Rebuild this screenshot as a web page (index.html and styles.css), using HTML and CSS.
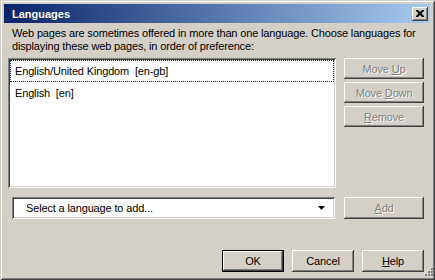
FILE: index.html
```html
<!DOCTYPE html>
<html lang="en">

<head>
    <meta charset="UTF-8">
    <title>Languages</title>
    <link rel="stylesheet" href="styles.css">
</head>

<body>
    <div class="window">
        <div class="titlebar">
            <span class="title">Languages</span>
            <div class="close">
                <svg width="8" height="7" viewBox="0 0 8 7">
                    <path d="M0 0h2l2 2 2-2h2v1l-2.5 2.5 2.5 2.5v1h-2l-2-2-2 2h-2v-1l2.5-2.5-2.5-2.5z" fill="#000" />
                </svg>
            </div>
        </div>
        <div class="content">
            <p class="intro">Web pages are sometimes offered in more than one language. Choose languages for<br>displaying these web pages, in order of preference:</p>
            <div class="lang-grid">
                <div class="listbox">
                    <div class="item focused">English/United Kingdom&nbsp; [en-gb]</div>
                    <div class="item">English&nbsp; [en]</div>
                </div>
                <div class="side-buttons">
                    <div class="btn disabled"><span>Move <u>U</u>p</span></div>
                    <div class="btn disabled"><span>Move <u>D</u>own</span></div>
                    <div class="btn disabled"><span><u>R</u>emove</span></div>
                </div>
                <div class="combo">
                    <span>Select a language to add...</span>
                    <svg width="7" height="4" viewBox="0 0 7 4">
                        <path d="M0 0h7l-3.5 4z" fill="#000" />
                    </svg>
                </div>
                <div class="btn disabled"><span><u>A</u>dd</span></div>
            </div>
            <div class="footer">
                <div class="btn default"><span>OK</span></div>
                <div class="btn"><span>Cancel</span></div>
                <div class="btn"><span><u>H</u>elp</span></div>
            </div>
        </div>
        <!-- size grip in the corner -->
        <svg class="grip" width="11" height="11" viewBox="0 0 11 11">
            <g fill="#fff">
                <rect x="8" y="0" width="1" height="1" />
                <rect x="5" y="3" width="1" height="1" />
                <rect x="8" y="3" width="1" height="1" />
                <rect x="2" y="6" width="1" height="1" />
                <rect x="5" y="6" width="1" height="1" />
                <rect x="8" y="6" width="1" height="1" />
            </g>
            <g fill="#808080">
                <rect x="9" y="1" width="2" height="2" />
                <rect x="6" y="4" width="2" height="2" />
                <rect x="9" y="4" width="2" height="2" />
                <rect x="3" y="7" width="2" height="2" />
                <rect x="6" y="7" width="2" height="2" />
                <rect x="9" y="7" width="2" height="2" />
            </g>
        </svg>
    </div>
</body>

</html>
```

FILE: styles.css
```css
* {
    box-sizing: border-box;
}

body {
    margin: 0;
    background: #D4D0C8;
    font-family: "Liberation Sans", Arial, sans-serif;
    font-size: 11px;
    letter-spacing: -0.15px;
    color: #000;
}

.window {
    position: relative;
    width: 435px;
    height: 280px;
    padding: 4px 5px 4px 4px;
    background: #D4D0C8;
    box-shadow: inset 1px 1px #D4D0C8, inset -1px -1px #404040,
        inset 2px 2px #fff, inset -2px -2px #808080;
}

.titlebar {
    height: 19px;
    display: flex;
    align-items: center;
    justify-content: space-between;
    padding: 0 2px 0 8px;
    background: linear-gradient(to right, #0A246A, #A6CAF0);
}

.title {
    color: #fff;
    font-weight: bold;
    font-size: 11px;
    letter-spacing: 0;
}

.close {
    width: 16px;
    height: 14px;
    display: flex;
    align-items: center;
    justify-content: center;
    background: #D4D0C8;
    box-shadow: inset -1px -1px #404040, inset 1px 1px #fff,
        inset -2px -2px #808080;
}

.close svg {
    margin-left: -1px;
}

.content {
    padding: 0 6px 0 4px;
}

.intro {
    margin: 4px 0 0 4px;
    line-height: 13px;
    white-space: nowrap;
}

.lang-grid {
    margin-top: 5px;
    display: grid;
    grid-template-columns: 328px 80px;
    column-gap: 8px;
    row-gap: 9px;
}

.listbox {
    height: 130px;
    padding: 2px;
    background: #fff;
    box-shadow: inset 1px 1px #808080, inset -1px -1px #fff,
        inset 2px 2px #404040, inset -2px -2px #D4D0C8;
}

.item {
    height: 22px;
    line-height: 22px;
    padding-left: 5px;
}

.item.focused {
    outline: 1px dotted #0A246A;
    outline-offset: -1px;
}

.side-buttons {
    display: flex;
    flex-direction: column;
    gap: 3px;
}

.btn {
    height: 22px;
    display: flex;
    align-items: center;
    justify-content: center;
    background: #D4D0C8;
    box-shadow: inset -1px -1px #404040, inset 1px 1px #fff,
        inset -2px -2px #808080, inset 2px 2px #D4D0C8;
}

.side-buttons .btn {
    height: 21px;
}

.btn.disabled {
    color: #808080;
    text-shadow: 1px 1px #fff;
}

.combo {
    height: 22px;
    margin: 0 1px 0 4px;
    display: flex;
    align-items: center;
    justify-content: space-between;
    padding: 0 10px 0 14px;
    background: #fff;
    box-shadow: inset 1px 1px #808080, inset -1px -1px #fff,
        inset 2px 2px #404040, inset -2px -2px #D4D0C8;
}

.footer {
    margin-top: 31px;
    display: flex;
    justify-content: flex-end;
    gap: 8px;
}

.footer .btn {
    width: 62px;
}

.btn.default {
    border: 1px solid #000;
    box-shadow: inset -1px -1px #404040, inset 1px 1px #fff,
        inset -2px -2px #808080;
}

.grip {
    position: absolute;
    right: 2px;
    bottom: 2px;
}
```
